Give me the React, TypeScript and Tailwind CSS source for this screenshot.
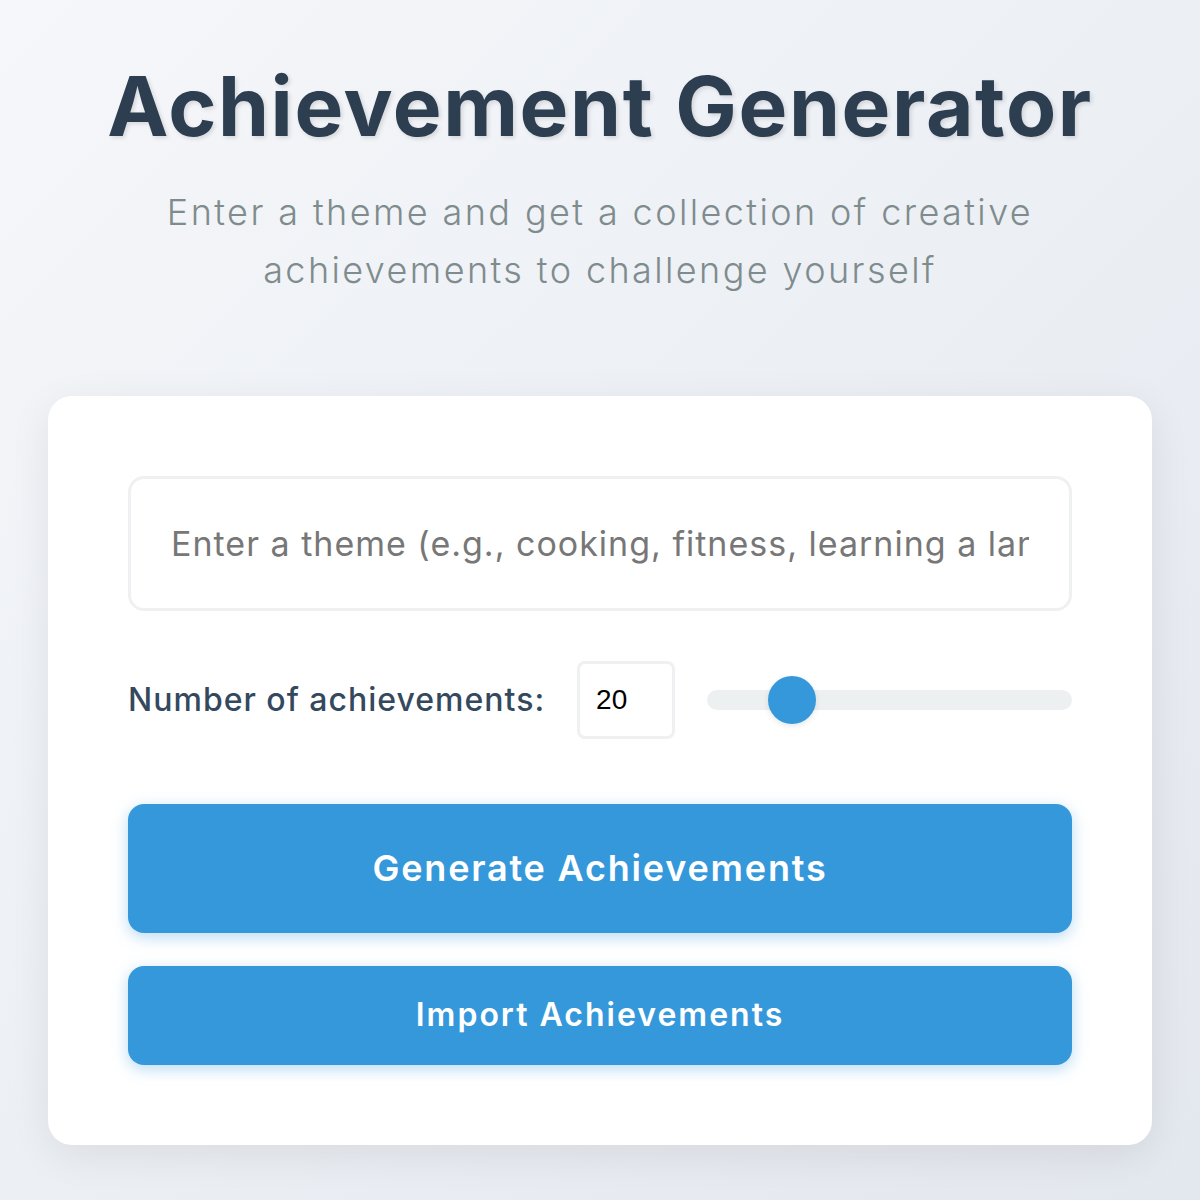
import React, { useState } from 'react';

export default function App() {
  const [theme, setTheme] = useState('');
  const [count, setCount] = useState(20);

  return (
    <div className="min-h-[1200px] w-full bg-[linear-gradient(135deg,#f5f7fa_0%,#e3e7ee_100%)] font-['Inter','Noto_Sans',sans-serif]">
      <div className="mx-auto max-w-[1200px] px-12 pt-[58px] pb-12">
        <h1 className="text-center text-[82px] font-bold leading-[1.2] tracking-[1.6px] text-[#2c3e50] [text-shadow:2px_2px_4px_rgba(0,0,0,0.12)]">
          Achievement Generator
        </h1>
        <p className="mx-auto mt-[28px] max-w-[920px] text-center text-[36px] font-light leading-[1.6] tracking-[2.4px] text-[#7f8c8d]">
          Enter a theme and get a collection of creative achievements to challenge yourself
        </p>

        <div className="mt-[96px] rounded-[24px] bg-white p-20 shadow-[0_10px_40px_rgba(0,0,0,0.08)]">
          <input
            type="text"
            value={theme}
            onChange={(e) => setTheme(e.target.value)}
            placeholder="Enter a theme (e.g., cooking, fitness, learning a language)"
            className="block h-[135px] w-full rounded-[16px] border-[3px] border-[#eef0f1] px-10 text-[34px] tracking-[1px] text-[#2c3e50] outline-none placeholder:text-[#777]"
          />

          <div className="mt-[50px] flex items-center gap-8">
            <label className="text-[32px] font-medium tracking-[1px] text-[#34495e]">Number of achievements:</label>
            <input
              type="number"
              min={1}
              max={100}
              value={count}
              onChange={(e) => setCount(Number(e.target.value))}
              className="h-[78px] w-[98px] rounded-[8px] border-[3px] border-[#eef0f1] px-4 font-['Liberation_Sans',sans-serif] text-[28px] text-black outline-none [appearance:textfield] [&::-webkit-inner-spin-button]:appearance-none"
            />
            <input
              type="range"
              min={1}
              max={100}
              value={count}
              onChange={(e) => setCount(Number(e.target.value))}
              className="h-5 flex-1 cursor-pointer appearance-none rounded-full bg-[#ecf0f1] outline-none [&::-webkit-slider-thumb]:h-12 [&::-webkit-slider-thumb]:w-12 [&::-webkit-slider-thumb]:appearance-none [&::-webkit-slider-thumb]:rounded-full [&::-webkit-slider-thumb]:bg-[#3498db] [&::-webkit-slider-thumb]:shadow-[0_2px_6px_rgba(0,0,0,0.1)]"
            />
          </div>

          <button className="mt-[65px] block h-[129px] w-full rounded-[16px] bg-[#3498db] text-[36px] font-semibold tracking-[1.8px] text-white shadow-[0_4px_15px_rgba(52,152,219,0.35)]">
            Generate Achievements
          </button>
          <button className="mt-[33px] block h-[99px] w-full rounded-[16px] bg-[#3498db] text-[32px] font-semibold tracking-[2px] text-white shadow-[0_4px_15px_rgba(52,152,219,0.35)]">
            Import Achievements
          </button>
        </div>
      </div>
    </div>
  );
}
